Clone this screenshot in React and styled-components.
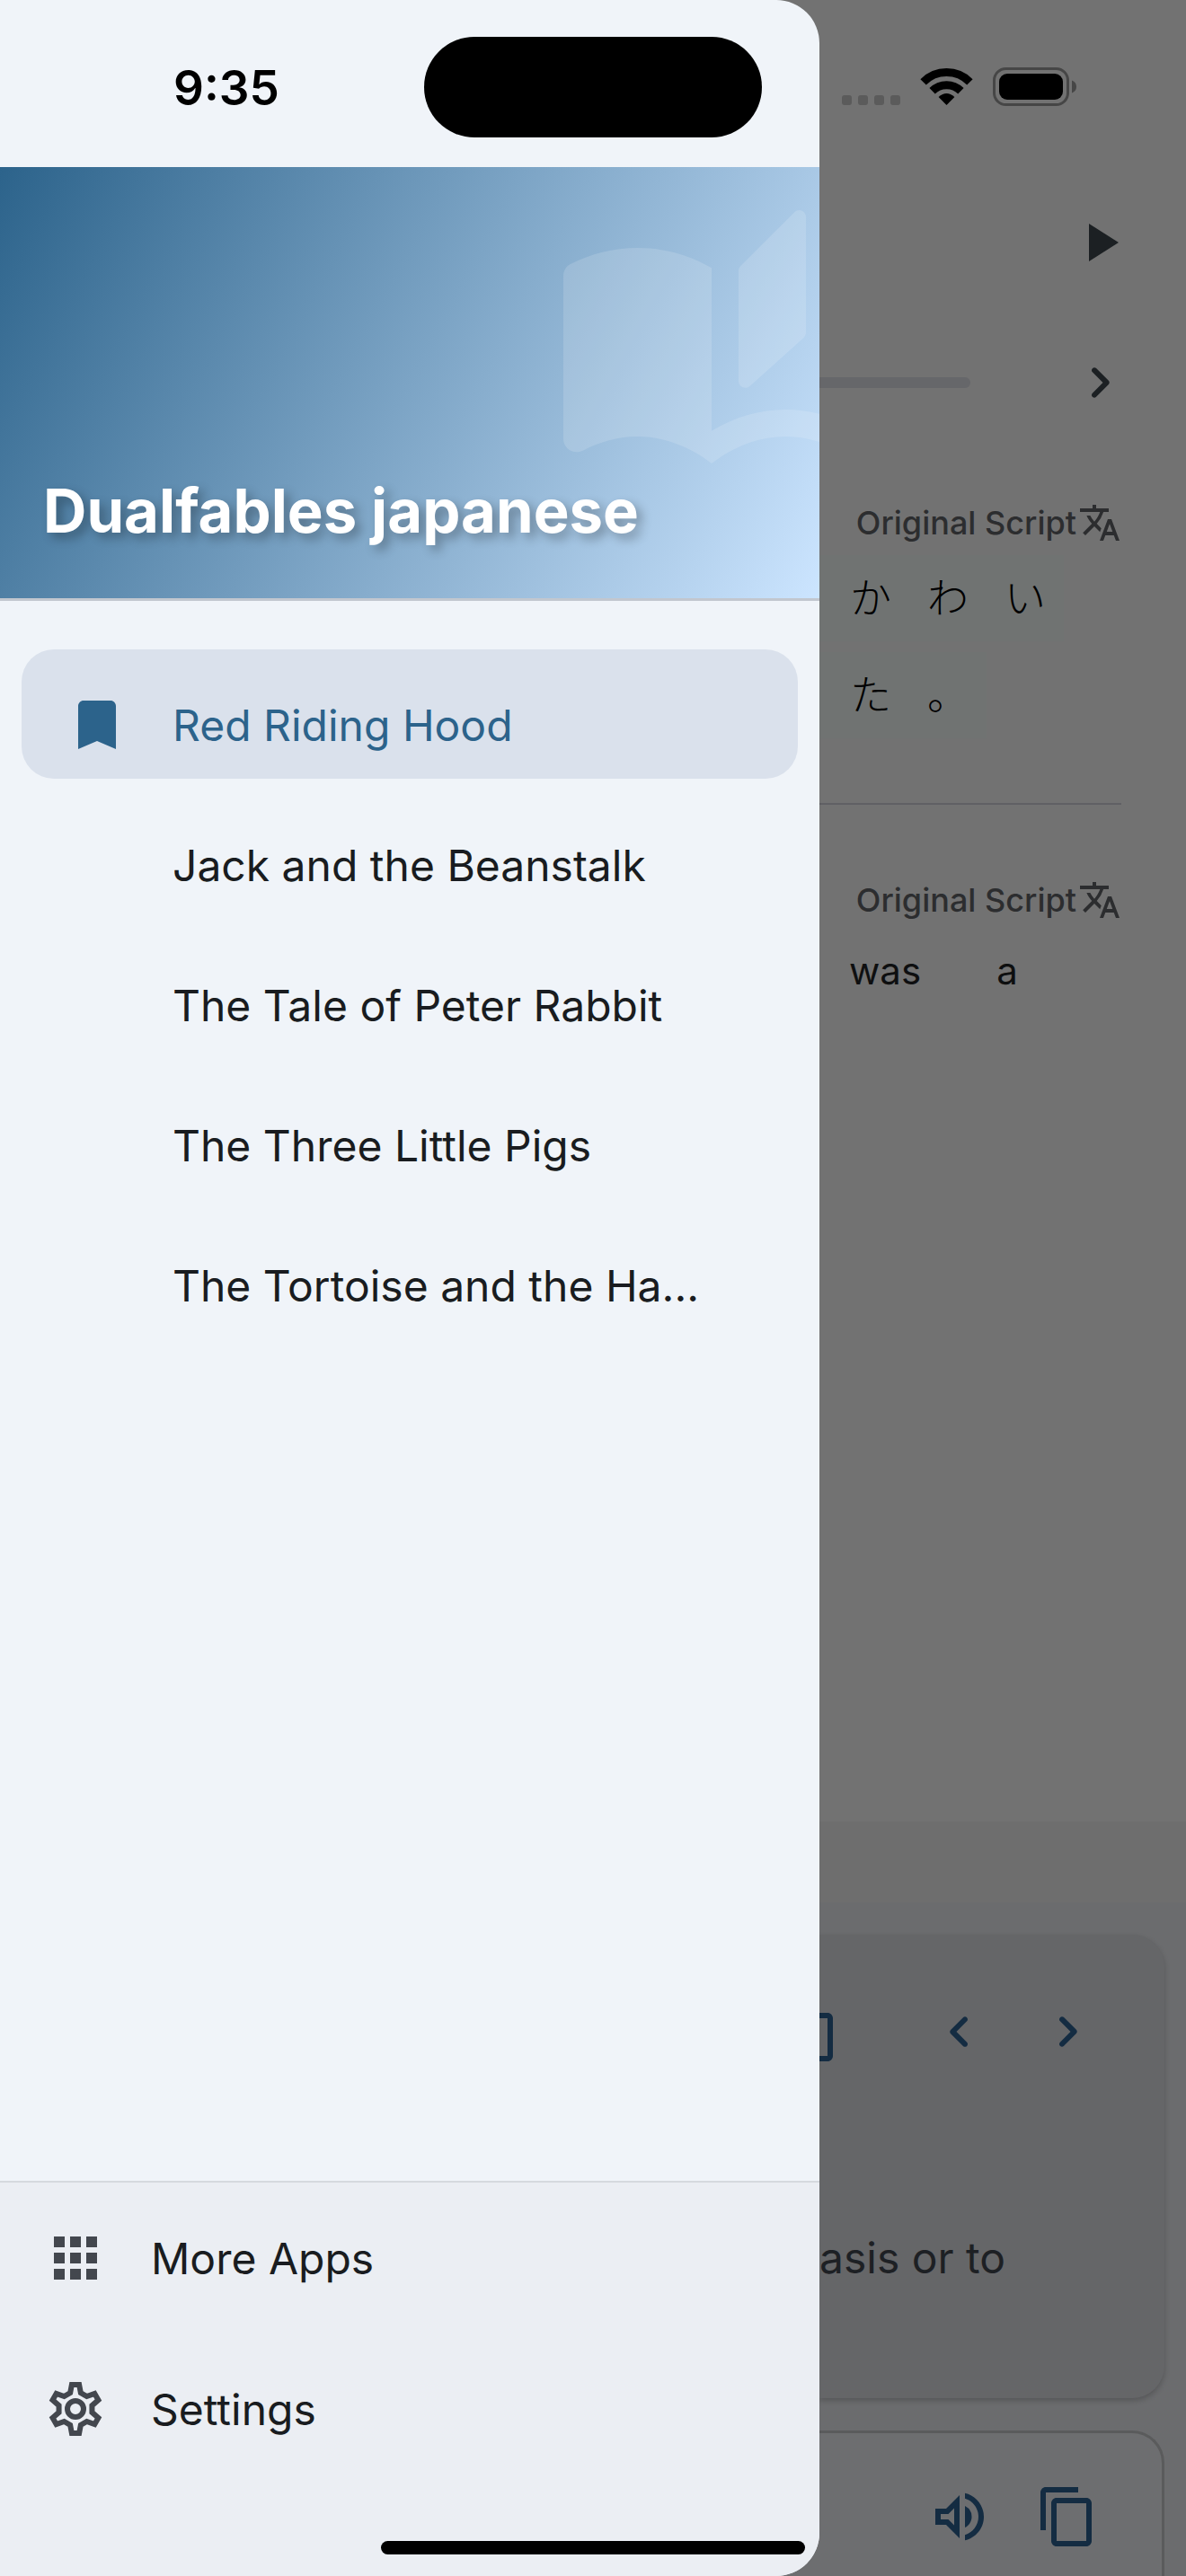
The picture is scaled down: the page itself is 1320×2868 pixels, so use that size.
import React from 'react'
import styled, { createGlobalStyle } from 'styled-components'

const GlobalStyle = createGlobalStyle`
  * {
    box-sizing: border-box;
  }
  body {
    margin: 0;
    background: #727272;
    font-family: Inter, "Noto Sans CJK JP", "Liberation Sans", sans-serif;
  }
`

const Screen = styled.div`
  position: relative;
  display: flex;
  min-height: 100vh;
  overflow: hidden;
  background: linear-gradient(#727272 80%, #6d6e70 80%);
`

/* system status bar, drawn over everything */
const StatusBar = styled.div`
  position: absolute;
  top: 0;
  left: 0;
  right: 0;
  z-index: 2;
  height: 186px;
  display: grid;
  grid-template-columns: 1fr 376px 1fr;
  padding-top: 41px;
  color: #000;
`
const Clock = styled.time`
  justify-self: center;
  height: 112px;
  padding-left: 32px;
  font-size: 53px;
  font-weight: 600;
  line-height: 114px;
`
const Island = styled.div`
  height: 112px;
  border-radius: 56px;
  background: #000;
`
const StatusIcons = styled.div`
  display: flex;
  align-items: flex-end;
  height: 78px;
  padding-left: 88px;
`
const HomeIndicator = styled.div`
  position: absolute;
  left: 50%;
  bottom: 24px;
  z-index: 2;
  width: 472px;
  height: 15px;
  margin-left: -236px;
  border-radius: 8px;
  background: #000;
`

const Drawer = styled.aside`
  flex: none;
  width: 912px;
  max-width: 85vw;
  display: flex;
  flex-direction: column;
  padding-top: 186px;
  border-radius: 0 48px 48px 0;
  overflow: hidden;
  background: #f0f4f9;
`
const DrawerHeader = styled.header`
  position: relative;
  height: 483px;
  display: flex;
  align-items: flex-end;
  padding: 0 48px 48px;
  border-bottom: 3px solid #c2c7cf;
  overflow: hidden;
  background: linear-gradient(118deg, #2c638b, #cce5ff);
`
const BookArt = styled.svg`
  position: absolute;
  top: 30px;
  right: -60px;
  width: 360px;
  height: 360px;
  fill: rgba(255, 255, 255, 0.15);
`
const Title = styled.h1`
  position: relative;
  margin: 0;
  color: #fff;
  font-size: 67px;
  font-weight: 700;
  line-height: 98px;
  white-space: nowrap;
  text-shadow: 6px 6px 12px rgba(0, 0, 0, 0.3);
`
const StoryList = styled.nav`
  flex: 1;
  display: flex;
  flex-direction: column;
  gap: 12px;
  padding: 54px 24px;
`
const Story = styled.a`
  height: 144px;
  display: flex;
  align-items: center;
  gap: 48px;
  padding: 24px 48px 0;
  border-radius: 36px;
  background: ${(p) => (p.$active ? '#dae1ec' : 'transparent')};
  color: ${(p) => (p.$active ? '#2c638b' : '#191c20')};
  font-size: 48px;
  text-decoration: none;
  white-space: nowrap;
`
const IconSlot = styled.span`
  flex: none;
  display: flex;
  width: 72px;
  height: 72px;
`
const DrawerFooter = styled.footer`
  border-top: 2px solid #d5d9de;
  padding-bottom: 102px;
  background: #ebeef3;
`
const FooterLink = styled.a`
  height: 168px;
  display: flex;
  align-items: center;
  gap: 48px;
  padding: 0 48px;
  color: #191c20;
  font-size: 48px;
  text-decoration: none;
`

const Glyph = styled.svg`
  display: block;
  flex: none;
  width: ${(p) => p.$w || p.$size || 72}px;
  height: ${(p) => p.$size || 72}px;
  fill: ${(p) => p.$color || 'currentColor'};
`

const Reader = styled.main`
  flex: 1;
  min-width: 0;
  display: flex;
  flex-direction: column;
  padding-top: 186px;
`
const IconButton = styled.button`
  display: flex;
  padding: 0;
  border: 0;
  background: none;
  color: ${(p) => (p.$accent ? '#142c42' : '#1c2023')};
  cursor: pointer;
`
const TopBar = styled.div`
  height: 168px;
  display: flex;
  align-items: center;
  justify-content: flex-end;
  padding-right: 60px;
`
const ProgressRow = styled.div`
  height: 144px;
  display: flex;
  align-items: center;
  gap: 108px;
  padding-right: 60px;
`
const Track = styled.div`
  flex: 1;
  height: 12px;
  border-radius: 0 6px 6px 0;
  background: #66676a;
`
const Passage = styled.section`
  display: flex;
  flex-direction: column;
  gap: 12px;
  margin-right: 72px;
  padding: ${(p) => (p.$second ? '82px' : '60px')} 0 72px;
  border-bottom: ${(p) => (p.$second ? 'none' : '2px solid #606064')};
`
const PassageHeader = styled.div`
  height: 48px;
  display: flex;
  align-items: center;
  justify-content: flex-end;
  gap: 2px;
  color: #2c2d2f;
  font-size: 36px;
  font-weight: 500;
  white-space: nowrap;
`
const KanaRow = styled.div`
  align-self: flex-start;
  height: 96px;
  display: flex;
  align-items: center;
  padding: 0 0 8px 14px;
  background: #707372;
  color: #000;
  font-family: "Noto Sans CJK JP", sans-serif;
  font-size: 46px;
  font-weight: 300;
`
const Kana = styled.span`
  width: 86px;
  text-align: center;
`
const WordRow = styled.div`
  height: 84px;
  display: flex;
  align-items: center;
  gap: 84px;
  padding-left: 33px;
  color: #0e0f10;
  font-size: 42px;
`
const Spacer = styled.div`
  flex: 1;
`
const Strip = styled.div`
  height: 90px;
  background: #6e6e6e;
`
const Panel = styled.div`
  display: flex;
  flex-direction: column;
  gap: 36px;
  padding: 36px 24px 0 0;
  overflow: hidden;
  background: #6b6c6e;
`
const Card = styled.section`
  padding: 72px 72px 120px 0;
  border-radius: 0 36px 36px 0;
  background: #656668;
  box-shadow: 0 3px 6px rgba(0, 0, 0, 0.2);
`
const CardTools = styled.div`
  display: flex;
  justify-content: flex-end;
  gap: 48px;
`
const CutButton = styled(IconButton)`
  margin-right: auto;
`
const Note = styled.p`
  margin: 180px 0 0;
  color: #1d2024;
  font-size: 48px;
  line-height: 72px;
  white-space: nowrap;
`
const OutlineCard = styled.section`
  height: 162px;
  display: flex;
  justify-content: flex-end;
  gap: 48px;
  padding: 57px 69px 0 0;
  border: solid #5a5b5c;
  border-width: 3px 3px 0 0;
  border-radius: 0 36px 0 0;
  background: #6d6e70;
`

const COPY = 'M16 1H4c-1.1 0-2 .9-2 2v14h2V3h12V1zm3 4H8c-1.1 0-2 .9-2 2v14c0 1.1.9 2 2 2h11c1.1 0 2-.9 2-2V7c0-1.1-.9-2-2-2zm0 16H8V7h11v14z'
const CHEVRON_RIGHT = 'M9.29 6.71c-.39.39-.39 1.02 0 1.41L13.17 12l-3.88 3.88c-.39.39-.39 1.02 0 1.41.39.39 1.02.39 1.41 0l4.59-4.59c.39-.39.39-1.02 0-1.41L10.7 6.7c-.38-.38-1.02-.38-1.41.01z'
const CHEVRON_LEFT = 'M14.71 6.71c-.39-.39-1.02-.39-1.41 0L8.71 11.3c-.39.39-.39 1.02 0 1.41l4.59 4.59c.39.39 1.02.39 1.41 0 .39-.39.39-1.02 0-1.41L10.83 12l3.88-3.88c.39-.39.38-1.03 0-1.41z'
const VOLUME = 'M3 9v6h4l5 5V4L7 9H3zm7-.17v6.34L7.83 13H5v-2h2.83L10 8.83zM16.5 12A4.5 4.5 0 0014 7.97v8.05c1.48-.73 2.5-2.25 2.5-4.02zM14 3.23v2.06c2.89.86 5 3.54 5 6.71s-2.11 5.85-5 6.71v2.06c4.01-.91 7-4.49 7-8.77s-2.99-7.86-7-8.77z'
const TRANSLATE = 'M12.87 15.07l-2.54-2.51.03-.03A17.52 17.52 0 0014.07 6H17V4h-7V2H8v2H1v1.99h11.17C11.5 7.92 10.44 9.75 9 11.35 8.07 10.32 7.3 9.19 6.69 8h-2c.73 1.63 1.73 3.17 2.98 4.56l-5.09 5.02L4 19l5-5 3.11 3.11.76-2.04zM18.5 10h-2L12 22h2l1.12-3h4.75L21 22h2l-4.5-12zm-2.62 7l1.62-4.33L19.12 17h-3.24z'
const APPS = 'M4 8h4V4H4v4zm6 12h4v-4h-4v4zm-6 0h4v-4H4v4zm0-6h4v-4H4v4zm6 0h4v-4h-4v4zm6-10v4h4V4h-4zm-6 4h4V4h-4v4zm6 6h4v-4h-4v4zm0 6h4v-4h-4v4z'
const BOOKMARK = 'M17 3H7c-1.1 0-2 .9-2 2v16l7-3 7 3V5c0-1.1-.9-2-2-2z'

const Icon = ({ d, ...rest }) => (
  <Glyph viewBox="0 0 24 24" aria-hidden="true" {...rest}>
    <path d={d} />
  </Glyph>
)

// one tooth of the gear, repeated every 60 degrees
const tooth = [[-1.95, -5.97], [-1.37, -9], [1.37, -9], [1.95, -5.97]]
const gearPoints = [0, 1, 2, 3, 4, 5]
  .flatMap((n) => {
    const a = (n * Math.PI) / 3
    return tooth.map(([x, y]) => [
      12 + x * Math.cos(a) - y * Math.sin(a),
      12 + x * Math.sin(a) + y * Math.cos(a),
    ])
  })
  .map((p) => p.join(','))
  .join(' ')

const GearIcon = () => (
  <Glyph viewBox="0 0 24 24" aria-hidden="true">
    <g fill="none" stroke="#43474e" strokeWidth="2">
      <polygon points={gearPoints} />
      <circle cx="12" cy="12" r="3" />
    </g>
  </Glyph>
)

const Signals = () => (
  <svg width="262" height="44" viewBox="0 0 262 44" aria-hidden="true">
    <g fill="#5b5b5b">
      {[1, 19, 37, 55].map((x) => (
        <rect key={x} x={x} y="31" width="11" height="11" rx="3" />
      ))}
    </g>
    <g fill="none" stroke="#000" strokeWidth="9">
      <path d="M91.6 16.4A36.5 36.5 0 0 1 143.4 16.4" />
      <path d="M101.6 26.3A22.5 22.5 0 0 1 133.4 26.3" />
    </g>
    <path d="M117.5 42L108.6 33Q117.5 25 126.4 33z" />
    <rect x="170.5" y="1.5" width="82" height="40" rx="13" fill="none" stroke="#464646" strokeWidth="3" />
    <rect x="176" y="7" width="71" height="29" rx="9" />
    <path d="M257 14.500q5 2 5 7t-5 7z" fill="#464646" />
  </svg>
)

const stories = [
  'Red Riding Hood',
  'Jack and the Beanstalk',
  'The Tale of Peter Rabbit',
  'The Three Little Pigs',
  'The Tortoise and the Ha...',
]

const ScriptLabel = () => (
  <PassageHeader>
    Original Script
    <Icon d={TRANSLATE} $size={48} />
  </PassageHeader>
)

const App = () => {
  return (
    <Screen>
      <GlobalStyle />
      <StatusBar>
        <Clock>9:35</Clock>
        <Island />
        <StatusIcons>
          <Signals />
        </StatusIcons>
      </StatusBar>

      <Drawer>
        <DrawerHeader>
          <BookArt viewBox="0 0 24 24" aria-hidden="true">
            <path d="M22.47 5.2c-.47-.24-.96-.44-1.47-.61v12.03c-1.14-.41-2.31-.62-3.5-.62-1.9 0-3.78.54-5.5 1.58V5.48C10.38 4.55 8.51 4 6.5 4c-1.79 0-3.48.44-4.97 1.2-.33.16-.53.51-.53.88v12.08c0 .58.47.99 1 .99.16 0 .32-.04.48-.12C3.69 18.4 5.05 18 6.5 18c2.07 0 3.98.82 5.5 2 1.52-1.18 3.43-2 5.5-2 1.45 0 2.81.4 4.02 1.04.16.08.32.12.48.12.52 0 1-.41 1-.99V6.08c0-.37-.2-.72-.53-.88z" />
            <path d="M18.15 1.35l-4 4c-.1.1-.15.22-.15.36v8.18c0 .43.51.66.83.37l4-3.6c.11-.1.17-.23.17-.37V1.71c0-.45-.54-.67-.85-.36z" />
          </BookArt>
          <Title>Dualfables japanese</Title>
        </DrawerHeader>
        <StoryList>
          {stories.map((name, i) => (
            <Story key={name} href="#" $active={i === 0}>
              <IconSlot>{i === 0 && <Icon d={BOOKMARK} />}</IconSlot>
              {name}
            </Story>
          ))}
        </StoryList>
        <DrawerFooter>
          <FooterLink href="#">
            <Icon d={APPS} $color="#43474e" />
            More Apps
          </FooterLink>
          <FooterLink href="#">
            <GearIcon />
            Settings
          </FooterLink>
        </DrawerFooter>
      </Drawer>

      <Reader>
        <TopBar>
          <IconButton aria-label="Play">
            <Icon d="M8 5v14l11-7z" />
          </IconButton>
        </TopBar>
        <ProgressRow>
          <Track />
          <IconButton aria-label="Next page">
            <Icon d={CHEVRON_RIGHT} />
          </IconButton>
        </ProgressRow>
        <Passage>
          <ScriptLabel />
          <KanaRow>
            <Kana>か</Kana>
            <Kana>わ</Kana>
            <Kana>い</Kana>
          </KanaRow>
          <KanaRow>
            <Kana>た</Kana>
            <Kana>。</Kana>
          </KanaRow>
        </Passage>
        <Passage $second>
          <ScriptLabel />
          <WordRow>
            <span>was</span>
            <span>a</span>
          </WordRow>
        </Passage>
        <Spacer />
        <Strip />
        <Panel>
          <Card>
            <CardTools>
              <CutButton $accent aria-label="Copy note">
                <Icon d={COPY} viewBox="16 0 8 24" $w={24} />
              </CutButton>
              <IconButton $accent aria-label="Previous note">
                <Icon d={CHEVRON_LEFT} />
              </IconButton>
              <IconButton $accent aria-label="Next note">
                <Icon d={CHEVRON_RIGHT} />
              </IconButton>
            </CardTools>
            <Note>asis or to</Note>
          </Card>
          <OutlineCard>
            <IconButton $accent aria-label="Listen">
              <Icon d={VOLUME} />
            </IconButton>
            <IconButton $accent aria-label="Copy">
              <Icon d={COPY} />
            </IconButton>
          </OutlineCard>
        </Panel>
      </Reader>
      <HomeIndicator />
    </Screen>
  )
}

export default App
